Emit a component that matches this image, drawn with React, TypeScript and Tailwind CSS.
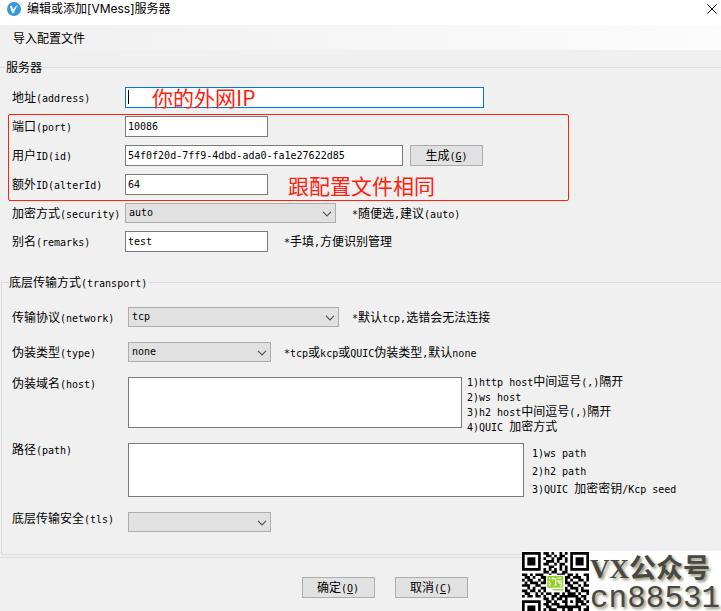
import { type ReactNode, type SelectHTMLAttributes } from "react";
import clsx from "clsx";

const FIELD =
  "block border bg-white px-0.5 font-['DejaVu_Sans_Mono',monospace] text-[10px] text-black outline-none";
const INPUT = clsx(FIELD, "h-[21px] border-[#7a7a7a]");
const TEXTAREA = clsx(FIELD, "resize-none border-[#7a7a7a]");
const BUTTON =
  "h-[21px] w-[73px] border border-[#adadad] bg-[#e1e1e1] text-center leading-none hover:border-[#0078d7]";
const MARK =
  "pointer-events-none absolute whitespace-nowrap text-[21px] leading-6 text-[#ff2010]";

const QR_ROWS = [
  "1111111011010010101111111",
  "1000001001101011001000001",
  "1011101010010110101011101",
  "1011101001110100101011101",
  "1011101011001011001011101",
  "1000001000110010101000001",
  "1111111010101010101111111",
  "0000000011011001100000000",
  "1101011100100111011010011",
  "0110100111011010110111001",
  "1011001010000000101001101",
  "0101110110000000110110010",
  "1110011000000000011001011",
  "0010100110000000101110100",
  "1101101010000000110010111",
  "0110010101101101011101001",
  "1011011010011011111110110",
  "0000000011010110100011010",
  "1111111001101001101011101",
  "1000001011011100100010110",
  "1011101001100111111111001",
  "1011101010111001011001011",
  "1011101001001110110110100",
  "1000001011010101101011011",
  "1111111010110110011010101",
];

const QR_PATH = QR_ROWS.map((row, y) =>
  [...row].map((cell, x) => (cell === "1" ? `M${x} ${y}h1v1h-1z` : "")).join("")
).join("");

// Latin runs are set in a half-width mono face, the rest stays full width.
function Song({ children }: { children: string }) {
  return (
    <>
      {children.split(/([\x20-\x7e]+)/).map((part, i) =>
        i % 2 ? (
          <span
            key={i}
            className="font-['DejaVu_Sans_Mono',monospace] text-[10px] leading-none whitespace-pre"
          >
            {part}
          </span>
        ) : (
          part
        )
      )}
    </>
  );
}

type RowProps = {
  id: string;
  label: string;
  top?: boolean;
  wide?: boolean;
  children: ReactNode;
};

function Row({ id, label, top, wide, children }: RowProps) {
  return (
    <div className={clsx("flex", top ? "items-start" : "items-center")}>
      <label
        htmlFor={id}
        className={clsx(
          "shrink-0 leading-3 whitespace-nowrap",
          wide ? "w-[116px]" : "w-[113px]"
        )}
      >
        <Song>{label}</Song>
      </label>
      {children}
    </div>
  );
}

function Select({
  className,
  children,
  ...props
}: SelectHTMLAttributes<HTMLSelectElement>) {
  return (
    <div className={clsx("relative h-5 shrink-0", className)}>
      <select
        {...props}
        className="block h-full w-full appearance-none border border-[#adadad] bg-[#e1e1e1] pr-5 pl-[3px] font-['DejaVu_Sans_Mono',monospace] text-[10px] text-black outline-none"
      >
        {children}
      </select>
      <svg
        viewBox="0 0 10 6"
        className="pointer-events-none absolute top-2 right-1 h-1.5 w-2.5"
        fill="none"
        stroke="#505050"
        strokeWidth="1.2"
      >
        <path d="M1 0.8 5 4.8 9 0.8" />
      </svg>
    </div>
  );
}

function Note({ children }: { children: string }) {
  return (
    <span className="leading-3 whitespace-nowrap">
      <Song>{children}</Song>
    </span>
  );
}

function AccessButton({ text, accessKey }: { text: string; accessKey: string }) {
  return (
    <button type="button" accessKey={accessKey} className={BUTTON}>
      {text}
      <span className="font-['DejaVu_Sans_Mono',monospace] text-[10px] leading-none">
        (<u>{accessKey}</u>)
      </span>
    </button>
  );
}

function TitleBar() {
  return (
    <header className="flex h-[25px] items-center bg-white pr-1 pb-[7px] pl-[7px]">
      <svg viewBox="0 0 14 14" className="h-3.5 w-3.5">
        <circle cx="7" cy="7" r="7" fill="#3498d8" />
        <path
          d="M2.8 4.4 4.8 3.6 6.1 7.8Q7.6 4.2 11.4 2.8 8.2 6 6.6 11.2H5.3Z"
          fill="#fff"
        />
      </svg>
      <h1 className="ml-1.5 font-['Inter','Noto_Sans_CJK_SC',sans-serif]">
        编辑或添加[VMess]服务器
      </h1>
      <button type="button" aria-label="关闭" className="ml-auto">
        <svg viewBox="0 0 10 10" className="h-2.5 w-2.5" stroke="#000" fill="none">
          <path d="M0.3 0.3 9.7 9.7M9.7 0.3 0.3 9.7" />
        </svg>
      </button>
    </header>
  );
}

function ServerFields() {
  return (
    <div className="flex flex-col gap-2 pt-3 pl-3">
      <div className="relative">
        <Row id="address" label="地址(address)">
          <input
            id="address"
            className={clsx(FIELD, "h-[21px] w-[359px] border-[#0078d7]")}
          />
        </Row>
        <span className="absolute top-[3px] left-[116px] h-3.5 w-px bg-black" />
        <span className={clsx(MARK, "top-[-2px] left-[140px]")}>你的外网IP</span>
      </div>

      <div className="relative flex flex-col gap-2">
        <Row id="port" label="端口(port)">
          <input id="port" defaultValue="10086" className={clsx(INPUT, "w-[143px]")} />
        </Row>
        <Row id="uid" label="用户ID(id)">
          <input
            id="uid"
            defaultValue="54f0f20d-7ff9-4dbd-ada0-fa1e27622d85"
            className={clsx(INPUT, "mr-[7px] w-[278px]")}
          />
          <AccessButton text="生成" accessKey="G" />
        </Row>
        <Row id="alterId" label="额外ID(alterId)">
          <input id="alterId" defaultValue="64" className={clsx(INPUT, "w-[143px]")} />
        </Row>
        <div className="pointer-events-none absolute -top-0.5 -bottom-1.5 -left-1 w-[561px] rounded-xs border border-[#ff2010]" />
        <span className={clsx(MARK, "bottom-[-2px] left-[276px]")}>跟配置文件相同</span>
      </div>

      <Row id="security" label="加密方式(security)">
        <Select id="security" defaultValue="auto" className="mr-4 w-[211px]">
          <option>auto</option>
          <option>aes-128-gcm</option>
          <option>none</option>
        </Select>
        <Note>*随便选,建议(auto)</Note>
      </Row>
      <Row id="remarks" label="别名(remarks)">
        <input
          id="remarks"
          defaultValue="test"
          className={clsx(INPUT, "mr-4 w-[143px]")}
        />
        <Note>*手填,方便识别管理</Note>
      </Row>
    </div>
  );
}

function TransportFields() {
  return (
    <fieldset className="mt-[22px] ml-px border-y border-l border-[#dcdcdc] pb-[22px]">
      <legend className="ml-1.5 px-px leading-4">
        <Song>底层传输方式(transport)</Song>
      </legend>
      <div className="flex flex-col gap-[15px] pt-[17px] pl-2.5">
        <Row id="network" label="传输协议(network)" wide>
          <Select id="network" defaultValue="tcp" className="mr-[13px] w-[211px]">
            <option>tcp</option>
            <option>kcp</option>
            <option>ws</option>
            <option>h2</option>
            <option>quic</option>
          </Select>
          <Note>*默认tcp,选错会无法连接</Note>
        </Row>
        <Row id="type" label="伪装类型(type)" wide>
          <Select id="type" defaultValue="none" className="mr-[13px] w-[143px]">
            <option>none</option>
            <option>http</option>
          </Select>
          <Note>*tcp或kcp或QUIC伪装类型,默认none</Note>
        </Row>
        <Row id="host" label="伪装域名(host)" wide top>
          <textarea
            id="host"
            className={clsx(TEXTAREA, "mr-[5px] h-[51px] w-[334px]")}
          />
          <ul className="-mt-1 -mb-2 leading-[15px] whitespace-nowrap">
            <li><Song>1)http host中间逗号(,)隔开</Song></li>
            <li><Song>2)ws host</Song></li>
            <li><Song>3)h2 host中间逗号(,)隔开</Song></li>
            <li><Song>4)QUIC 加密方式</Song></li>
          </ul>
        </Row>
        <Row id="path" label="路径(path)" wide top>
          <textarea
            id="path"
            className={clsx(TEXTAREA, "mr-2 h-[54px] w-[396px]")}
          />
          <ul className="leading-[18px] whitespace-nowrap">
            <li><Song>1)ws path</Song></li>
            <li><Song>2)h2 path</Song></li>
            <li><Song>3)QUIC 加密密钥/Kcp seed</Song></li>
          </ul>
        </Row>
        <Row id="tls" label="底层传输安全(tls)" wide top>
          <Select id="tls" defaultValue="" className="w-[143px]">
            <option></option>
            <option>tls</option>
          </Select>
        </Row>
      </div>
    </fieldset>
  );
}

function Watermark() {
  return (
    <aside className="absolute right-0 bottom-0 flex h-[60px] w-[199px] overflow-hidden bg-white text-[#484848]">
      <svg viewBox="0 0 25 25" className="mt-px h-[67px] w-[67px] shrink-0">
        <path d={QR_PATH} fill="#000" />
        <rect x="9" y="8.5" width="7" height="6.5" fill="#fff" />
        <rect x="9.4" y="8.9" width="6" height="4.4" fill="#93cf2c" />
        <path
          d="M10 9.6l.6.5M9.9 11l.6.4M10 12.7l.7-1M11.6 9.4l-.4 1M11.4 10h1.2v2.4h-.5M13.2 9.7h1.6M13 10.8h2M13.8 10.8v.8h1l-.2 1.1h-.5"
          fill="none"
          stroke="#fff"
          strokeWidth="0.4"
        />
        <path d="M11.4 14.1h4" stroke="#93cf2c" strokeWidth="0.5" />
      </svg>
      <div className="pl-px whitespace-nowrap [text-shadow:2px_2px_3px_#8f8f70]">
        <p className="h-9 font-['Liberation_Serif','Noto_Sans_CJK_SC',serif] text-[27px] leading-9 font-bold">
          VX公众号
        </p>
        <p className="font-['Liberation_Mono',monospace] text-[31px] leading-6">
          cn88531
        </p>
      </div>
    </aside>
  );
}

export default function App() {
  return (
    <div className="relative min-h-screen overflow-hidden bg-[#f0f0f0] pb-3 font-['Noto_Sans_CJK_SC',sans-serif] text-xs text-black">
      <TitleBar />
      <nav className="flex h-[25px] items-center bg-linear-to-r from-[#f0f0f0] to-[#fcfcfc] pl-[13px]">
        <button type="button">导入配置文件</button>
      </nav>
      <form onSubmit={(e) => e.preventDefault()}>
        <fieldset className="mt-[9px] border-y border-[#dcdcdc] pb-0.5">
          <legend className="ml-[5px] px-px leading-4">服务器</legend>
          <ServerFields />
          <TransportFields />
        </fieldset>
        <div className="mt-[19px] flex justify-center gap-5 pl-12">
          <AccessButton text="确定" accessKey="O" />
          <AccessButton text="取消" accessKey="C" />
        </div>
      </form>
      <Watermark />
    </div>
  );
}
